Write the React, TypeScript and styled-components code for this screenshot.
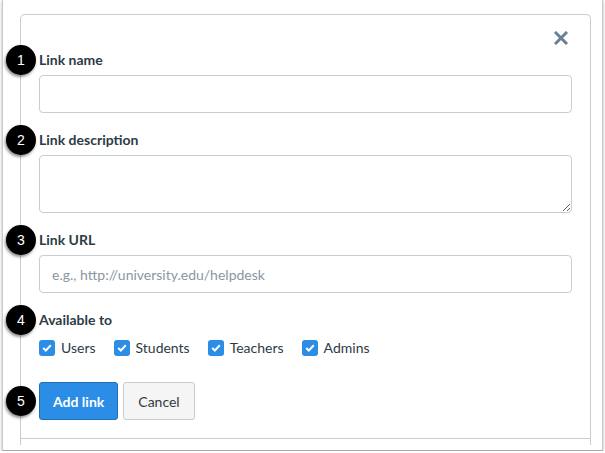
import styled, { createGlobalStyle } from "styled-components";

const GlobalStyle = createGlobalStyle`
  body {
    margin: 0;
    background: #ffffff;
    font-family: Lato, "Open Sans", sans-serif;
    color: #2d3b45;
  }
`;

const audiences = ["Users", "Students", "Teachers", "Admins"];

const App = () => {
  return (
    <>
      <GlobalStyle />
      <Frame>
        <Clip>
          <Panel>
            <Form>
              <Header>
                <CloseButton aria-label="Close">
                  <svg width="14" height="14" viewBox="0 0 14 14">
                    <path d="M2 2 L12 12 M12 2 L2 12" stroke="#6a8096" strokeWidth="3" strokeLinecap="square" />
                  </svg>
                </CloseButton>
              </Header>

              <Field>
                <Label>
                  <Marker>1</Marker>
                  Link name
                </Label>
                <TextInput type="text" />
              </Field>

              <Field>
                <Label>
                  <Marker>2</Marker>
                  Link description
                </Label>
                <TextArea />
              </Field>

              <Field>
                <Label>
                  <Marker>3</Marker>
                  Link URL
                </Label>
                <TextInput type="text" placeholder="e.g., http://university.edu/helpdesk" />
              </Field>

              <Field>
                <Label>
                  <Marker>4</Marker>
                  Available to
                </Label>
                <CheckRow>
                  {audiences.map((name) => (
                    <CheckItem key={name}>
                      <CheckBox>
                        <svg width="10" height="8" viewBox="0 0 10 8">
                          <path d="M1.2 4 L3.8 6.5 L8.8 1.3" stroke="#ffffff" strokeWidth="2" fill="none" />
                        </svg>
                      </CheckBox>
                      {name}
                    </CheckItem>
                  ))}
                </CheckRow>
              </Field>

              <ButtonRow>
                <Marker>5</Marker>
                <Button $primary>Add link</Button>
                <Button>Cancel</Button>
              </ButtonRow>
            </Form>
            <Rest />
          </Panel>
        </Clip>
      </Frame>
    </>
  );
};

const Frame = styled.div`
  box-sizing: border-box;
  margin-left: 2px;
  width: 601px;
  height: 451px;
  padding-bottom: 5px;
  background: #ffffff;
  border: 1px solid #c9c9c9;
  border-top: none;
  border-bottom-color: #a8a8a8;
  box-shadow: 0 1px 3px rgba(0, 0, 0, 0.3);
`;

const Clip = styled.div`
  height: 445px;
  overflow: hidden;
  padding: 14px 10px 0 17px;
  box-sizing: border-box;
`;

const Panel = styled.div`
  width: 571px;
  box-sizing: border-box;
  border: 1px solid #c7cdd1;
  border-bottom: none;
  border-radius: 5px 5px 0 0;
`;

const Form = styled.div`
  display: flex;
  flex-direction: column;
  gap: 17px;
  padding: 17px 18px 18px 18px;
  border-bottom: 1px solid #c7cdd1;
`;

const Header = styled.div`
  display: flex;
  justify-content: flex-end;
  height: 13px;
  margin-bottom: -12px;
  padding-right: 4px;
`;

const CloseButton = styled.span`
  display: flex;
  width: 14px;
  height: 14px;
  margin-top: -1px;
`;

const Field = styled.div`
  display: flex;
  flex-direction: column;
`;

const Label = styled.div`
  position: relative;
  font-size: 14px;
  font-weight: 700;
  line-height: 20px;
  margin-bottom: 5px;
`;

const Marker = styled.span`
  position: absolute;
  left: -33px;
  top: 50%;
  transform: translateY(-50%);
  display: flex;
  align-items: center;
  justify-content: center;
  width: 30px;
  height: 30px;
  border-radius: 50%;
  background: #000000;
  color: #ffffff;
  font-family: "Liberation Sans", Arial, sans-serif;
  font-size: 14px;
  font-weight: 400;
  box-shadow: -1px 2px 3px rgba(0, 0, 0, 0.45);
`;

const TextInput = styled.input`
  box-sizing: border-box;
  width: 533px;
  height: 38px;
  margin: 0;
  padding: 0 12px;
  border: 1px solid #c7cdd1;
  border-radius: 4px;
  font-family: Lato, sans-serif;
  font-size: 14px;
  color: #2d3b45;
  outline: none;

  &::placeholder {
    color: #8b969e;
  }
`;

const TextArea = styled.textarea`
  box-sizing: border-box;
  width: 533px;
  height: 58px;
  margin: 0;
  padding: 8px 12px;
  border: 1px solid #c7cdd1;
  border-radius: 4px;
  font-family: Lato, sans-serif;
  font-size: 14px;
  outline: none;
  display: block;
`;

const CheckRow = styled.div`
  display: flex;
  gap: 18px;
  margin-top: 3px;
  height: 20px;
`;

const CheckItem = styled.label`
  display: flex;
  align-items: center;
  gap: 6px;
  font-size: 14px;
  line-height: 20px;
`;

const CheckBox = styled.span`
  display: flex;
  align-items: center;
  justify-content: center;
  width: 16px;
  height: 16px;
  border-radius: 3px;
  background: #2b8de6;
`;

const ButtonRow = styled.div`
  position: relative;
  display: flex;
  gap: 5px;
  margin-top: 7px;
`;

const Button = styled.button<{ $primary?: boolean }>`
  box-sizing: border-box;
  height: 38px;
  margin: 0;
  padding: 0 ${(p) => (p.$primary ? 13 : 14)}px;
  border-radius: 3px;
  font-family: Lato, sans-serif;
  font-size: 14px;
  font-weight: ${(p) => (p.$primary ? 700 : 400)};
  color: ${(p) => (p.$primary ? "#ffffff" : "#2d3b45")};
  background: ${(p) => (p.$primary ? "#2b8de6" : "#f5f5f5")};
  border: 1px solid ${(p) => (p.$primary ? "#1f6fb5" : "#c7cdd1")};
`;

const Rest = styled.div`
  height: 20px;
`;

export default App;
